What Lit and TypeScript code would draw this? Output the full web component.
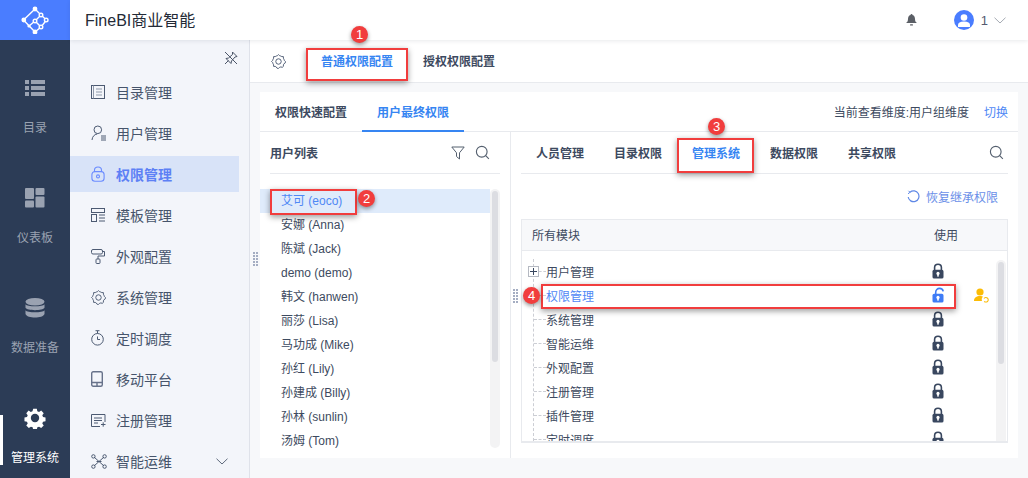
import { LitElement, html, css, svg } from "lit";
import { customElement } from "lit/decorators.js";

const lock = (open = false) => {
  const c = open ? "#3f7cf6" : "#39475f";
  return html`<svg width="12" height="16" viewBox="0 0 12 16">
    ${open
      ? svg`<path d="M2.5 8V5.2C2.5 3 4.2 1.4 6.3 1.4c1.9 0 3.4 1.2 3.7 3" transform="translate(1.2 0)" fill="none" stroke="${c}" stroke-width="1.6"/>`
      : svg`<path d="M2.6 8V4.6C2.6 2.6 4 1.2 6 1.2s3.4 1.4 3.4 3.4V8" fill="none" stroke="${c}" stroke-width="1.6"/>`}
    <rect x="0.5" y="6.8" width="11" height="8.7" rx="1.6" fill="${c}"/>
    <circle cx="6" cy="10.4" r="1.6" fill="#fff"/><rect x="5.2" y="10.6" width="1.6" height="3" fill="#fff"/>
  </svg>`;
};

const search = (s = 16) => html`<svg width="${s}" height="${s}" viewBox="0 0 16 16" fill="none" stroke="#55606f" stroke-width="1.2">
  <circle cx="7.2" cy="7.2" r="5.7"/><path d="M11.4 11.4l3.4 3.4"/></svg>`;

const gearPath = (() => {
  const pts: string[] = [];
  for (let i = 0; i < 32; i++) {
    const a = (i / 32) * Math.PI * 2;
    const r = 6.3 + (Math.cos(a * 8) > 0 ? 1.1 : 0);
    pts.push(`${(8 + r * Math.cos(a)).toFixed(2)} ${(8 + r * Math.sin(a)).toFixed(2)}`);
  }
  return `M${pts.join("L")}z`;
})();

const gear = (c: string, s = 16) => html`<svg width="${s}" height="${s}" viewBox="0 0 16 16" fill="none" stroke="${c}" stroke-width="1">
  <path d="${gearPath}" stroke-linejoin="round"/><circle cx="8" cy="8" r="2.900"/></svg>`;

const g = "#4c5a72";
const navIcons: Record<string, unknown> = {
  dir: html`<svg width="14" height="16" viewBox="0 0 14 16" fill="none" stroke="${g}"><rect x=".5" y="1.5" width="13" height="13"/><path d="M2.5 1.5v13M5 5h6M5 8h6M5 11h6" stroke-width=".9" stroke="#8490a2"/></svg>`,
  user: html`<svg width="16" height="16" viewBox="0 0 16 16" fill="none" stroke="${g}"><circle cx="6.8" cy="4.8" r="3.8"/><path d="M1 15c.3-3.5 2.4-5.6 5.2-6M10 11h5M10 13h5M10 15h5" stroke-width="1"/></svg>`,
  lock: html`<svg width="14" height="16" viewBox="0 0 14 16" fill="none" stroke="#6b8cff" stroke-width="1.1"><path d="M3.5 6V4.2C3.5 2.3 5 1 7 1s3.5 1.3 3.5 3.2V6"/><rect x=".9" y="5.6" width="12.2" height="9.6" rx="3"/><circle cx="7" cy="10.4" r="1.5"/></svg>`,
  tpl: html`<svg width="14" height="14" viewBox="0 0 14 14" fill="none" stroke="${g}"><rect x=".5" y=".5" width="13" height="4"/><rect x=".5" y="6.5" width="5" height="7"/><path d="M8 7h6M8 10h6M8 13h6"/></svg>`,
  look: html`<svg width="14" height="15" viewBox="0 0 14 15" fill="none" stroke="${g}"><rect x=".5" y=".5" width="11" height="4.5" rx="1.5"/><path d="M11.5 2.5h2V7H7v3"/><rect x="5" y="10" width="4" height="4.5" rx=".8"/></svg>`,
  sys: gear(g, 15),
  time: html`<svg width="13" height="16" viewBox="0 0 13 16" fill="none" stroke="${g}"><circle cx="6.5" cy="9.3" r="5.8"/><path d="M4.5 .7h4M6.5 1v2.5M6.5 6.5v3h2.5"/></svg>`,
  mob: html`<svg width="12" height="16" viewBox="0 0 12 16" fill="none" stroke="#67728a" stroke-width="1.4"><rect x=".7" y=".7" width="10.6" height="14.6" rx="1.5"/><path d="M1 11.5h10M6 11.5v3.5"/></svg>`,
  reg: html`<svg width="15" height="13" viewBox="0 0 15 13" fill="none" stroke="${g}"><path d="M9 12.5H.5V.5h13.5V8"/><path d="M3 4h8M3 6.5h8M3 9h4M10 10.5h4.5M12.2 8.3v4.4"/></svg>`,
  ops: html`<svg width="16" height="15" viewBox="0 0 16 15" fill="none" stroke="${g}"><path d="M3 3l10 9M13 3L3 12M5.5 7.5h5"/><circle cx="2.4" cy="2.4" r="1.7"/><circle cx="13.6" cy="2.4" r="1.7"/><circle cx="2.4" cy="12.6" r="1.7"/><circle cx="13.6" cy="12.6" r="1.7"/></svg>`,
};

const nav = [
  ["dir", "目录管理"], ["user", "用户管理"], ["lock", "权限管理"], ["tpl", "模板管理"], ["look", "外观配置"],
  ["sys", "系统管理"], ["time", "定时调度"], ["mob", "移动平台"], ["reg", "注册管理"], ["ops", "智能运维"],
];

const rail = [
  { t: "目录", i: html`<svg width="20" height="16" viewBox="0 0 20 16" fill="#9aa2b1"><rect width="4" height="4"/><rect x="6" width="14" height="4"/><rect y="6" width="4" height="4"/><rect x="6" y="6" width="14" height="4"/><rect y="12" width="4" height="4"/><rect x="6" y="12" width="14" height="4"/></svg>` },
  { t: "仪表板", i: html`<svg width="20" height="20" viewBox="0 0 20 20" fill="#9aa2b1"><rect width="9" height="11" rx="1"/><rect x="10.5" width="9" height="7" rx="1"/><rect y="12.5" width="9" height="7" rx="1"/><rect x="10.5" y="8.5" width="9" height="11" rx="1"/></svg>` },
  { t: "数据准备", i: html`<svg width="20" height="20" viewBox="0 0 20 20" fill="#9aa2b1"><ellipse cx="10" cy="3.8" rx="9.5" ry="3.8"/><path d="M.5 6.2C2 9 18 9 19.5 6.2v3.6C18 13 2 13 .5 9.8z"/><path d="M.5 12.2C2 15 18 15 19.5 12.2v3.8C18 20.8 2 20.8 .5 16z"/></svg>` },
  { t: "管理系统", on: true, i: html`<svg width="22" height="22" viewBox="0 0 22 22"><path fill="#fff" d="M9 .8h4l.6 2.8 1.9.8 2.4-1.6 2.8 2.8-1.6 2.4.8 1.9 2.8.6v4l-2.8.6-.8 1.9 1.6 2.4-2.8 2.8-2.4-1.6-1.9.8-.6 2.8H9l-.6-2.8-1.9-.8-2.4 1.6-2.8-2.8 1.6-2.4-.8-1.9-2.8-.6v-4l2.8-.6.8-1.9-1.6-2.4L3.9 2.8l2.4 1.6 1.9-.8z" transform="translate(1.1 1.1) scale(.9)"/><circle cx="11" cy="11" r="4.2" fill="#2c3c56"/></svg>` },
];

const users = ["艾可 (eoco)", "安娜 (Anna)", "陈斌 (Jack)", "demo (demo)", "韩文 (hanwen)", "丽莎 (Lisa)", "马功成 (Mike)", "孙红 (Lily)", "孙建成 (Billy)", "孙林 (sunlin)", "汤姆 (Tom)"];
const tree = ["用户管理", "权限管理", "系统管理", "智能运维", "外观配置", "注册管理", "插件管理", "定时调度"];

@customElement("app-root")
export class AppRoot extends LitElement {
  static styles = css`
    :host { display: block; width: 1028px; height: 478px; overflow: hidden; position: relative;
      font-family: "Liberation Sans", "Noto Sans CJK SC", sans-serif; font-size: 12px; color: #3d4a60; background: #f7f8fa; }
    .shell { display: grid; grid-template-columns: 70px 1fr; grid-template-rows: 40px 438px; height: 478px; }
    .logo { background: #4a7dff; display: flex; align-items: center; justify-content: center; }
    .top { background: #fff; display: flex; align-items: center; padding-left: 15px; box-shadow: 0 1px 4px rgba(30,40,60,.1); position: relative; z-index: 2; }
    .brand { font-size: 16px; color: #232a36; flex: 1; position: relative; top: -1px; }
    .bell { margin-right: 37px; display: flex; }
    .avatar { width: 20px; height: 20px; border-radius: 50%; background: #4a7dff; display: flex; align-items: center; justify-content: center; }
    .uid { margin: 0 6px 0 7px; font-size: 13px; color: #555a70; }
    .caret { margin-right: 22px; display: flex; }
    .rail { background: #2c3c56; display: flex; flex-direction: column; overflow: hidden; }
    .rail-i { height: 110px; flex: none; display: flex; flex-direction: column; align-items: center; color: #9aa2b1; position: relative; }
    .rail-i .ic { height: 24px; margin-top: 36px; display: flex; align-items: center; justify-content: center; }
    .rail-i .tx { margin-top: 19px; line-height: 18px; }
    .rail-i.on { color: #fff; }
    .rail-i.on::before { content: ""; position: absolute; left: 0; top: 45px; width: 3px; height: 50px; background: #fff; }
    .body { display: flex; min-width: 0; }
    .sub { width: 179px; flex: none; background: #f3f5fa; border-right: 1px solid #dfe2ea; overflow: hidden; }
    .pin { display: flex; justify-content: flex-end; height: 34px; padding: 11px 11px 0 0; box-sizing: border-box; }
    .sub-i { height: 36px; margin-bottom: 5px; margin-right: 10px; display: flex; align-items: center; font-size: 14px; color: #46546b; padding-left: 21px; }
    .sub-i .si { width: 25px; display: flex; justify-content: flex-start; }
    .sub-i span { flex: 1; }
    .sub-i svg.ch { margin-right: 11px; }
    .sub-i.on { background: #d8e3f8; color: #5d80f5; font-weight: bold; }
    .main { flex: 1; min-width: 0; display: flex; flex-direction: column; }
    .tabs { height: 43px; flex: none; background: #fff; border-bottom: 1px solid #e8eaee; display: flex; align-items: stretch; padding-left: 21px; box-sizing: border-box; }
    .tabs .gear { display: flex; align-items: center; margin-right: 20px; }
    .tab { display: flex; align-items: center; padding: 0 15px; font-weight: bold; color: #3d4a60; position: relative; top: -1px; }
    .tab.on { color: #3685f2; box-shadow: inset 0 -2px 0 #3685f2; }
    .panel { margin: 9px 10px 20px; flex: 1; background: #fff; display: flex; flex-direction: column; min-height: 0; }
    .phead { height: 40px; flex: none; border-bottom: 1px solid #e8eaee; display: flex; align-items: stretch; box-sizing: border-box; }
    .ptab { padding: 0 15px; display: flex; align-items: center; font-weight: bold; color: #3d4a60; border-bottom: 2px solid transparent; margin-bottom: -1px; }
    .ptab.on { color: #3685f2; border-bottom-color: #3685f2; }
    .dim { margin-left: auto; display: flex; align-items: center; padding-right: 10px; }
    .dim a { color: #4f88f5; margin-left: 15px; }
    .pbody { flex: 1; display: flex; min-height: 0; }
    .left { width: 250px; flex: none; border-right: 1px solid #e8eaee; display: flex; flex-direction: column; }
    .lhead { height: 42px; margin: 0 10px; border-bottom: 1px solid #e8eaee; display: flex; align-items: center; font-weight: bold; gap: 10px; flex: none; box-sizing: border-box; }
    .lhead b { flex: 1; font-weight: bold; }
    .lhead svg:last-child { margin-right: 10px; }
    .lwrap { flex: 1; display: flex; padding-top: 15px; padding-right: 10px; min-height: 0; }
    .list { flex: 1; }
    .u { height: 24px; line-height: 24px; padding-left: 21px; }
    .u.on { background: #dfebfb; color: #4f88f5; }
    .sb { width: 10px; flex: none; background: #f3f3f4; border-radius: 5px; padding: 2px; box-sizing: border-box; }
    .sb i { display: block; width: 6px; background: #dcdde2; border-radius: 3px; }
    .right { flex: 1; min-width: 0; padding: 0 10px; display: flex; flex-direction: column; }
    .rtabs { height: 42px; border-bottom: 1px solid #e8eaee; display: flex; align-items: center; font-weight: bold; padding-left: 15px; gap: 30px; flex: none; box-sizing: border-box; }
    .rtabs .on { color: #3685f2; }
    .rtabs svg { margin-left: auto; margin-right: 4px; }
    .restore { height: 45px; flex: none; display: flex; align-items: center; justify-content: flex-end; color: #6b8fe8; gap: 6px; padding-right: 10px; box-sizing: border-box; }
    .table { border: 1px solid #e8eaee; border-bottom-width: 2px; height: 224px; box-sizing: border-box; display: flex; flex-direction: column; overflow: hidden; }
    .thead { height: 31px; flex: none; background: #f7f8fa; border-bottom: 1px solid #e8eaee; display: flex; align-items: center; justify-content: space-between; padding: 0 49px 2px 10px; box-sizing: border-box; }
    .tbody { flex: 1; display: flex; min-height: 0; padding-top: 8px; overflow: hidden; }
    .rows { flex: 1; min-width: 0; margin-left: 11px; border-left: 1px dashed #ccced4; }
    .row { height: 24px; display: flex; align-items: center; }
    .row .d { width: 12px; border-top: 1px dashed #ccced4; flex: none; }
    .plus { width: 11px; height: 11px; margin-left: -6px; background: #fff; border: 1px solid #b5b9c2; box-sizing: border-box; flex: none; position: relative; }
    .plus::before { content: ""; position: absolute; left: 1px; right: 1px; top: 4px; height: 1px; background: #39475f; }
    .plus::after { content: ""; position: absolute; top: 1px; bottom: 1px; left: 4px; width: 1px; background: #39475f; }
    .row .d.s { width: 7px; }
    .row .l { flex: none; width: 386px; }
    .row.on .l { color: #4f88f5; }
    .row .k { width: 12px; display: flex; justify-content: center; flex: none; }
    .row .a { margin-left: 30px; display: flex; }
    .tbody .sb { margin: 1px 1px 0 0; height: 190px; align-self: flex-start; }
    .grip { display: grid; grid-template-columns: 2px 2px; gap: 1px; position: absolute; }
    .grip i { width: 2px; height: 2px; background: #a4adc2; }
    .mark { position: absolute; z-index: 3; border: 2px solid #f13d3d; box-sizing: border-box; box-shadow: 0 2px 6px rgba(0,0,0,.4); pointer-events: none; }
    .badge { position: absolute; z-index: 4; width: 17px; height: 17px; border-radius: 50%; background: #f13d3d; color: #fff; font-size: 13px; display: flex; align-items: center; justify-content: center; box-shadow: 0 2px 4px rgba(0,0,0,.4); }
  `;

  private grip(x: number, y: number) {
    return html`<div class="grip" style="left:${x}px;top:${y}px">${Array.from({ length: 10 }, () => html`<i></i>`)}</div>`;
  }

  render() {
    return html`<div class="shell">
      <div class="logo"><svg width="28" height="28" viewBox="0 0 28 28" fill="none" stroke="#fff" stroke-width="1.4">
        <path d="M2.5 14L14 3l6 6-6 6 6 6-6 5L2.5 14zM14 15l-6 5M20 9l5.5 5-5.5 7"/>
        <g fill="#fff" stroke="none"><circle cx="2.8" cy="14" r="2.4"/><circle cx="14" cy="3" r="2.4"/><circle cx="14" cy="26" r="2.4"/><circle cx="8" cy="20" r="1.6"/></g>
        <g fill="#4a7dff"><circle cx="20" cy="9" r="1.8"/><circle cx="25.2" cy="14" r="1.8"/><circle cx="20" cy="21" r="1.8"/><circle cx="14" cy="15" r="1.8"/></g>
      </svg></div>
      <div class="top">
        <div class="brand">FineBI商业智能</div>
        <div class="bell"><svg width="11" height="12" viewBox="0 0 11 12" fill="#5b5f66"><path d="M5.5 0c.6 0 1 .4 1 .9C8.300 1.400 9 3 9 5c0 2 .6 3.200 2 4H0c1.400-.8 2-2 2-4 0-2 .7-3.600 2.500-4.100 0-.5.400-.9 1-.9z"/><rect x="4" y="10.200" width="3" height="1.300" rx=".6"/></svg></div>
        <div class="avatar"><svg width="12" height="13" viewBox="0 0 12 13" fill="#fff"><circle cx="6" cy="3.500" r="3.300"/><path d="M0 13v-2c0-2 2-3.500 6-3.500s6 1.500 6 3.500v2z"/></svg></div>
        <div class="uid">1</div>
        <div class="caret"><svg width="12" height="7" viewBox="0 0 12 7" fill="none" stroke="#a5aab3"><path d="M.5.700L6 6l5.500-5.300"/></svg></div>
      </div>
      <div class="rail">
        ${rail.map((r) => html`<div class="rail-i ${r.on ? "on" : ""}"><div class="ic">${r.i}</div><div class="tx">${r.t}</div></div>`)}
      </div>
      <div class="body">
        <div class="sub">
          <div class="pin"><svg width="14" height="14" viewBox="0 0 14 14" fill="none" stroke="#4b5568"><path d="M8.500 1l4.500 4.500-2 .5-3.500 4-.5 2.500L2 7.500 4.500 7l4-3.500zM1 13l3.500-3.500M1 1l12 12"/></svg></div>
          ${nav.map(([k, t], i) => html`<div class="sub-i ${i === 2 ? "on" : ""}"><div class="si">${navIcons[k]}</div><span>${t}</span>${i === 9 ? html`<svg class="ch" width="12" height="7" viewBox="0 0 12 7" fill="none" stroke="#5f6a7c"><path d="M.5.700L6 6l5.500-5.300"/></svg>` : ""}</div>`)}
        </div>
        <div class="main">
          <div class="tabs">
            <div class="gear">${gear("#4c5a72", 15)}</div>
            <div class="tab on">普通权限配置</div>
            <div class="tab">授权权限配置</div>
          </div>
          <div class="panel">
            <div class="phead">
              <div class="ptab">权限快速配置</div>
              <div class="ptab on">用户最终权限</div>
              <div class="dim">当前查看维度:用户组维度<a>切换</a></div>
            </div>
            <div class="pbody">
              <div class="left">
                <div class="lhead"><b>用户列表</b>
                  <svg width="14" height="14" viewBox="0 0 14 14" fill="none" stroke="#55606f"><path d="M.8 1h12.400L8.500 6.800V13L5.500 10.500V6.800z"/></svg>
                  ${search(15)}
                </div>
                <div class="lwrap">
                  <div class="list">${users.map((u, i) => html`<div class="u ${i === 0 ? "on" : ""}">${u}</div>`)}</div>
                  <div class="sb" style="height:259px"><i style="height:171px"></i></div>
                </div>
              </div>
              <div class="right">
                <div class="rtabs">
                  <span>人员管理</span><span>目录权限</span><span class="on">管理系统</span><span>数据权限</span><span>共享权限</span>
                  ${search(15)}
                </div>
                <div class="restore"><svg width="13" height="13" viewBox="0 0 13 13" fill="none" stroke="#5f88e6" stroke-width="1.200"><path d="M3 2.200A5.400 5.400 0 1 1 1.200 7"/><path d="M1.500 .8L3 2.300 1 3.800" stroke-width="1"/></svg>恢复继承权限</div>
                <div class="table">
                  <div class="thead"><span>所有模块</span><span>使用</span></div>
                  <div class="tbody">
                    <div class="rows">
                      ${tree.map((t, i) => html`<div class="row ${i === 1 ? "on" : ""}">
                        ${i === 0 ? html`<div class="plus"></div><div class="d s"></div>` : html`<div class="d"></div>`}
                        <div class="l">${t}</div><div class="k">${lock(i === 1)}</div>
                        ${i === 1 ? html`<div class="a"><svg width="15" height="15" viewBox="0 0 15 15"><circle cx="6" cy="4" r="3.600" fill="#fcbc05"/><path d="M0 13c0-3.500 2.500-5 6-5 1.500 0 2.500.3 3 .8-1.200.8-1.600 2.500-1 4.200z" fill="#fcbc05"/><path d="M10 10.500a2.300 2.300 0 1 1 .2 2.800" fill="none" stroke="#fcbc05" stroke-width="1.100"/></svg></div>` : ""}
                      </div>`)}
                    </div>
                    <div class="sb"><i style="height:102px"></i></div>
                  </div>
                </div>
              </div>
            </div>
          </div>
        </div>
      </div>
    </div>
    ${this.grip(253, 252)}${this.grip(513, 289)}
    <div class="mark" style="left:306px;top:48px;width:102px;height:33px"></div>
    <div class="mark" style="left:270px;top:189px;width:87px;height:26px"></div>
    <div class="mark" style="left:677px;top:138px;width:77px;height:35px"></div>
    <div class="mark" style="left:541px;top:284px;width:415px;height:25px"></div>
    <div class="badge" style="left:351px;top:26px">1</div>
    <div class="badge" style="left:358px;top:190px">2</div>
    <div class="badge" style="left:708px;top:118px">3</div>
    <div class="badge" style="left:523px;top:287px">4</div>`;
  }
}
